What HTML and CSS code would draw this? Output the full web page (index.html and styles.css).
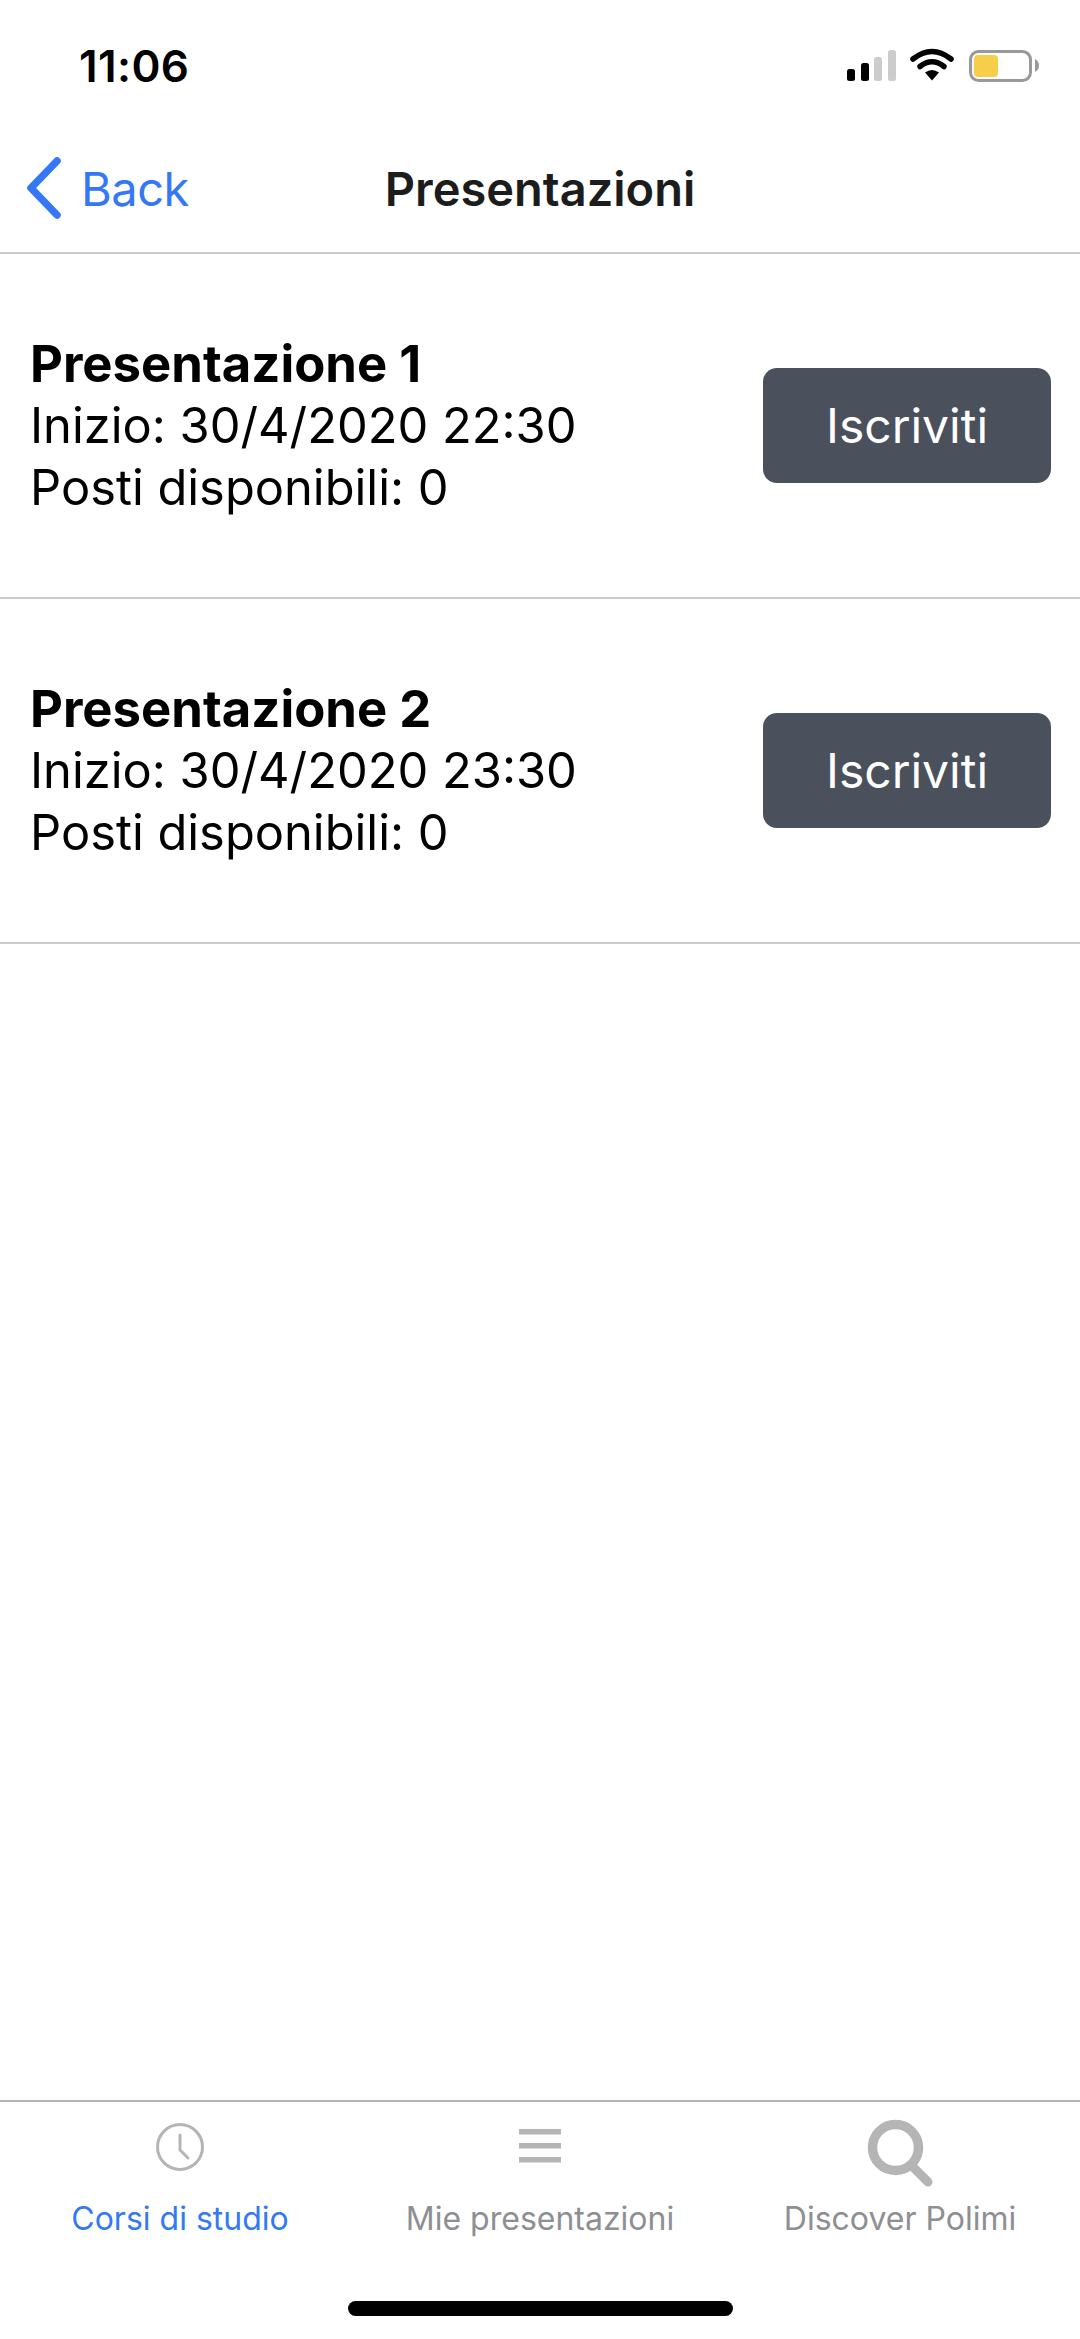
FILE: index.html
```html
<!DOCTYPE html>
<html lang="it">
<head>
  <meta charset="UTF-8" />
  <title>Presentazioni</title>
  <meta name="viewport" content="width=device-width, initial-scale=1" />
  <link rel="stylesheet" href="styles.css">
</head>
<body>
  <div class="app">
    <div class="status-bar">
      <span class="time">11:06</span>
      <svg class="status-icons" width="200" height="40" viewBox="840 46 200 40">
        <rect x="847" y="70" width="8" height="12" rx="2.5" fill="#000" />
        <rect x="861" y="64" width="8" height="18" rx="2.5" fill="#000" />
        <rect x="874" y="58" width="8" height="24" rx="2.5" fill="#ccc" />
        <rect x="888" y="51" width="8" height="31" rx="2.5" fill="#ccc" />
        <path d="M913 60 Q932 45 951 60" fill="none" stroke="#000" stroke-width="5.5" stroke-linecap="round" />
        <path d="M920 67.500 Q932 58 944 67.500" fill="none" stroke="#000" stroke-width="5.500" stroke-linecap="round" />
        <path d="M925 73.500 Q932 68.500 939 73.500 L932 81.500 Z" fill="#000" />
        <rect x="970.500" y="52.500" width="60" height="29" rx="8" fill="#fff" stroke="#999" stroke-width="3" />
        <rect x="974" y="56" width="24" height="22" rx="4" fill="#f7cd4a" />
        <path d="M1035 60 Q1039 62 1039 66.500 Q1039 71 1035 73 Z" fill="#999" />
      </svg>
    </div>

    <div class="nav-bar">
      <a class="back">
        <svg width="40" height="66" viewBox="0 0 40 66">
          <path d="M34 6 L8 33 L34 60" fill="none" stroke="#3478f6" stroke-width="7.500" stroke-linecap="round" stroke-linejoin="round" />
        </svg>
        <span>Back</span>
      </a>
      <div class="nav-title">Presentazioni</div>
    </div>

    <div class="list">
      <div class="row">
        <div class="row-text">
          <div class="row-title">Presentazione 1</div>
          <div>Inizio: 30/4/2020 22:30</div>
          <div>Posti disponibili: 0</div>
        </div>
        <button class="btn">Iscriviti</button>
      </div>
      <div class="row">
        <div class="row-text">
          <div class="row-title">Presentazione 2</div>
          <div>Inizio: 30/4/2020 23:30</div>
          <div>Posti disponibili: 0</div>
        </div>
        <button class="btn">Iscriviti</button>
      </div>
    </div>

    <div class="tab-bar">
      <div class="tab active">
        <svg width="90" height="70" viewBox="0 0 90 70">
          <circle cx="45" cy="28" r="22.500" fill="none" stroke="#b5b5b5" stroke-width="3" />
          <path d="M45 16 V31 L53 39" fill="none" stroke="#b5b5b5" stroke-width="3" stroke-linecap="round" stroke-linejoin="round" />
        </svg>
        <span>Corsi di studio</span>
      </div>
      <div class="tab">
        <svg width="90" height="70" viewBox="0 0 90 70">
          <rect x="24" y="10" width="42" height="5.500" fill="#b5b5b5" />
          <rect x="24" y="24" width="42" height="5.500" fill="#b5b5b5" />
          <rect x="24" y="38" width="42" height="5.500" fill="#b5b5b5" />
        </svg>
        <span>Mie presentazioni</span>
      </div>
      <div class="tab">
        <svg width="90" height="70" viewBox="0 0 90 70">
          <circle cx="40.500" cy="28.500" r="23" fill="none" stroke="#b5b5b5" stroke-width="9.500" />
          <path d="M57 47 L73 63" fill="none" stroke="#b5b5b5" stroke-width="9" stroke-linecap="round" />
        </svg>
        <span>Discover Polimi</span>
      </div>
    </div>

    <div class="home-area">
      <div class="home-indicator"></div>
    </div>
  </div>
</body>
</html>
```

FILE: styles.css
```css
* { box-sizing: border-box; }
html, body { margin: 0; padding: 0; background: #fff; }
body { font-family: Inter, "Liberation Sans", sans-serif; color: #000; }

.app { display: flex; flex-direction: column; width: 1080px; height: 2339px; }

.status-bar {
  display: flex; justify-content: space-between; align-items: center;
  height: 130px; padding: 0 40px 0 79px;
}
.time { font-size: 44px; font-weight: 600; letter-spacing: 0.4px; padding-top: 2px; }
.status-icons { display: block; }

.nav-bar {
  position: relative; display: flex; align-items: center; justify-content: center;
  height: 124px; padding-bottom: 6px; border-bottom: 2px solid #cbcbcb;
}
.back {
  position: absolute; left: 23px; top: 0; bottom: 6px;
  display: flex; align-items: center; gap: 18px;
  color: #3478f6; font-size: 47px; letter-spacing: -0.5px;
}
.back svg { display: block; }
.nav-title { font-size: 47px; font-weight: 600; color: #1c1c1c; }

.list { flex: 1; }
.row {
  display: flex; align-items: center; justify-content: space-between;
  height: 345px; padding: 0 29px 0 30px; border-bottom: 2px solid #cbcbcb;
}
.row-text { font-size: 48.8px; line-height: 62px; }
.row-title { font-size: 50.8px; font-weight: 700; }

.btn {
  width: 288px; height: 115px; border: none; border-radius: 14px;
  background: #4a505c; color: #fff;
  font-family: inherit; font-size: 48px;
}

.tab-bar {
  display: grid; grid-template-columns: repeat(3, 1fr);
  height: 152px; padding-top: 17px; border-top: 2px solid #b4b4b4;
}
.tab {
  display: flex; flex-direction: column; align-items: center;
  color: #8e8e93; font-size: 32px; line-height: 40px;
}
.tab svg { display: block; margin-bottom: 10px; }
.tab.active { color: #3478f6; }

.home-area { display: flex; justify-content: center; height: 87px; padding-top: 49px; }
.home-indicator { width: 385px; height: 15px; border-radius: 8px; background: #000; }
```
